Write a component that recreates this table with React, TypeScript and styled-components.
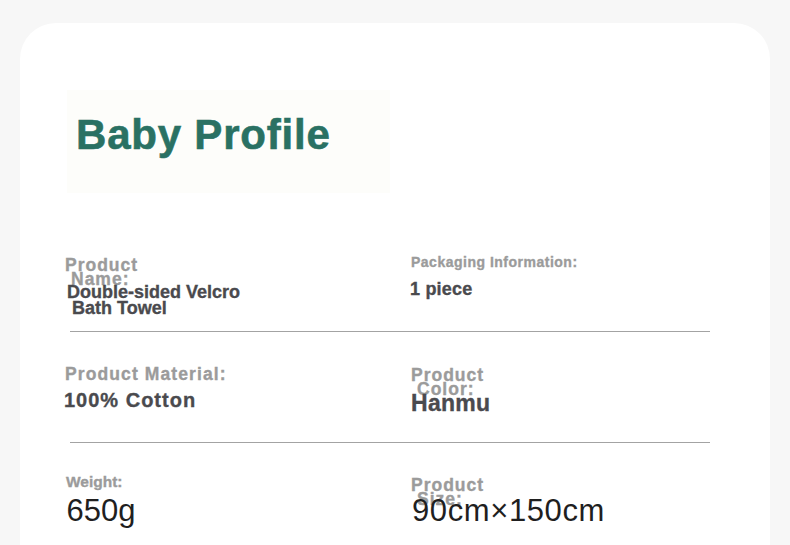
import React from "react";
import styled, { createGlobalStyle } from "styled-components";

const Global = createGlobalStyle`
  html, body { margin: 0; padding: 0; background: #f7f7f7; overflow: hidden; }
  body { font-family: "Liberation Sans", Arial, sans-serif; }
`;

const Card = styled.div`
  margin: 23px 20px 0 20px;
  background: #ffffff;
  border-radius: 36px 36px 0 0;
  height: 560px;
  display: flex;
  flex-direction: column;
`;

const TitleBox = styled.div`
  margin: 67px 0 0 47px;
  width: 323px;
  height: 103px;
  box-sizing: border-box;
  padding: 24px 0 0 9px;
  background: #fdfdfa;
`;

const Title = styled.h1`
  margin: 0;
  font-family: "Liberation Sans", Arial, sans-serif;
  font-weight: 700;
  font-size: 42px;
  line-height: 42px;
  letter-spacing: 0.8px;
  color: #2a7163;
  -webkit-text-stroke: 0.6px #2a7163;
`;

const Rows = styled.div`
  margin: 28px 0 0 45px;
  display: flex;
  flex-direction: column;
`;

const Row = styled.div`
  display: grid;
  grid-template-columns: 346px 1fr;
  height: 110px;
`;

const Divider = styled.div`
  margin-left: 5px;
  width: 640px;
  height: 1px;
  background: #a3a3a3;
`;

const Cell = styled.div`
  display: flex;
  flex-direction: column;
  align-items: flex-start;
`;

const Label = styled.div<{ $size: number; $lh: number; $top: number; $ls: number; $indent?: number }>`
  margin-top: ${(p) => p.$top}px;
  margin-left: ${(p) => p.$indent ?? 0}px;
  font-weight: 700;
  font-size: ${(p) => p.$size}px;
  line-height: ${(p) => p.$lh}px;
  letter-spacing: ${(p) => p.$ls}px;
  color: #9b9b9b;
  -webkit-text-stroke: 0.35px #9b9b9b;
  white-space: nowrap;
`;

const Value = styled.div<{
  $size: number;
  $lh: number;
  $top: number;
  $ls: number;
  $indent?: number;
  $regular?: boolean;
}>`
  position: relative;
  margin-top: ${(p) => p.$top}px;
  margin-left: ${(p) => p.$indent ?? 0}px;
  font-weight: ${(p) => (p.$regular ? 400 : 700)};
  font-size: ${(p) => p.$size}px;
  line-height: ${(p) => p.$lh}px;
  letter-spacing: ${(p) => p.$ls}px;
  color: ${(p) => (p.$regular ? "#1f1f1f" : "#4a4a4e")};
  -webkit-text-stroke: ${(p) => (p.$regular ? "0" : "0.35px #4a4a4e")};
  white-space: nowrap;
`;

const Line = styled.span<{ $indent?: number }>`
  display: block;
  padding-left: ${(p) => p.$indent ?? 0}px;
`;

export default function App() {
  return (
    <>
      <Global />
      <Card>
        <TitleBox>
          <Title>Baby Profile</Title>
        </TitleBox>
        <Rows>
          <Row>
            <Cell>
              <Label $size={17.5} $lh={14} $top={37} $ls={1}>
                <Line>Product</Line>
                <Line $indent={6}>Name:</Line>
              </Label>
              <Value $size={18} $lh={15.5} $top={-1} $ls={0} $indent={2}>
                <Line>Double-sided Velcro</Line>
                <Line $indent={5}>Bath Towel</Line>
              </Value>
            </Cell>
            <Cell>
              <Label $size={14} $lh={16} $top={33} $ls={0.5}>
                Packaging Information:
              </Label>
              <Value $size={18} $lh={20} $top={8.5} $ls={0.2} $indent={-1}>
                1 piece
              </Value>
            </Cell>
          </Row>
          <Divider />
          <Row>
            <Cell>
              <Label $size={17.5} $lh={20} $top={32} $ls={1.1}>
                Product Material:
              </Label>
              <Value $size={20} $lh={22} $top={5} $ls={1} $indent={-1}>
                100% Cotton
              </Value>
            </Cell>
            <Cell>
              <Label $size={17.5} $lh={14} $top={35.5} $ls={1}>
                <Line>Product</Line>
                <Line $indent={6}>Color:</Line>
              </Label>
              <Value $size={23} $lh={20} $top={-3} $ls={0.3} $indent={0}>
                Hanmu
              </Value>
            </Cell>
          </Row>
          <Divider />
          <Row>
            <Cell>
              <Label $size={15.5} $lh={16} $top={31} $ls={0} $indent={1}>
                Weight:
              </Label>
              <Value $size={31} $lh={32} $top={5} $ls={0} $indent={1.5} $regular>
                650g
              </Value>
            </Cell>
            <Cell>
              <Label $size={17.5} $lh={14} $top={35} $ls={1}>
                <Line>Product</Line>
                <Line $indent={6}>Size:</Line>
              </Label>
              <Value $size={31} $lh={32} $top={-11} $ls={0.6} $indent={1} $regular>
                90cm×150cm
              </Value>
            </Cell>
          </Row>
        </Rows>
      </Card>
    </>
  );
}
